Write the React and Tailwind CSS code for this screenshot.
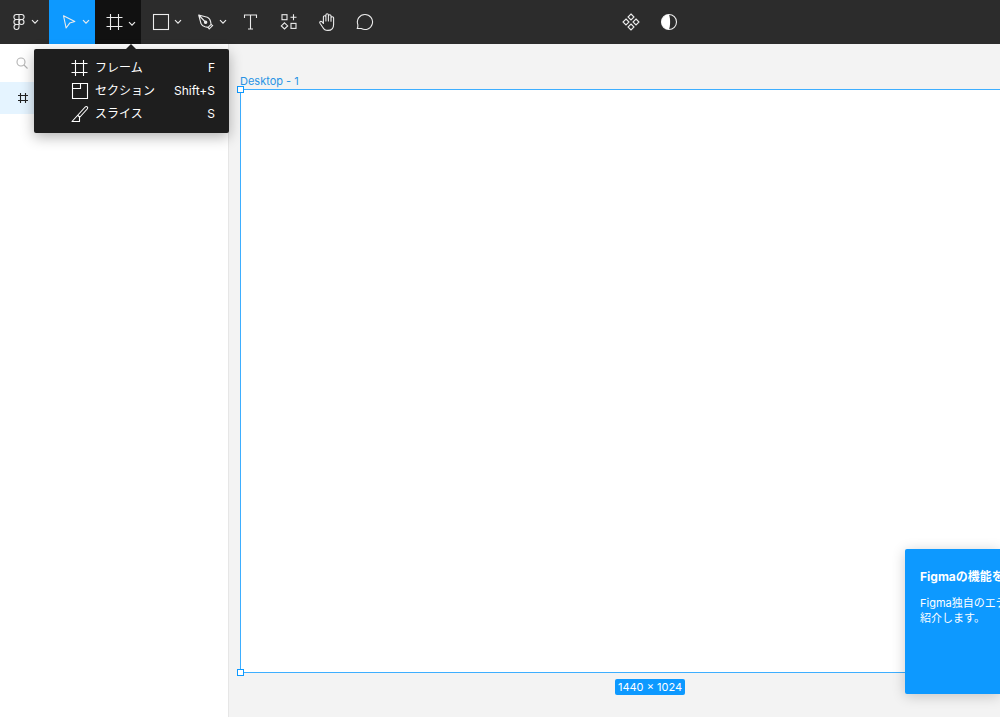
import React from "react";

function Icon({ children, className = "size-[18px]", box = 18 }) {
  return (
    <svg
      viewBox={`0 0 ${box} ${box}`}
      className={`shrink-0 ${className}`}
      fill="none"
      stroke="currentColor"
      strokeWidth="1.1"
      aria-hidden="true"
    >
      {children}
    </svg>
  );
}

const Chevron = ({ className = "" }) => (
  <svg viewBox="0 0 8 6" className={`h-[6px] w-[8px] shrink-0 ${className}`} fill="none" stroke="currentColor" strokeWidth="1.2" aria-hidden="true">
    <path d="M1 1.2 4 4.2 7 1.2" />
  </svg>
);

const FigmaIcon = () => (
  <Icon>
    <path d="M9 1.5H6.4a2.5 2.5 0 0 0 0 5H9zM9 1.5h2.6a2.5 2.5 0 0 1 0 5H9zM9 6.5H6.4a2.5 2.5 0 0 0 0 5H9zM9 11.5H6.4A2.5 2.5 0 1 0 9 14z" />
    <circle cx="11.5" cy="9" r="2.5" />
  </Icon>
);

const MoveIcon = () => (
  <Icon>
    <path d="M3.5 2.7 14.8 8.4 9.7 10.1 6.1 15z" strokeLinejoin="round" />
  </Icon>
);

const FrameIcon = () => (
  <Icon>
    <path d="M4.5 1v16M12.5 1v16M.5 4.5h16M.5 13.5h16" />
  </Icon>
);

const RectIcon = () => (
  <Icon>
    <rect x="1.5" y="1.5" width="15" height="15" />
  </Icon>
);

const PenIcon = () => (
  <Icon>
    <path d="M1.7 2 10.3 4.2c2 .7 2.8 2.1 3.3 4.4l.5 2.8-3 3-3-.6c-2.1-.5-3.4-1.5-4.1-3.3zM1.7 2l6.2 6.5" strokeLinejoin="round" />
    <circle cx="8.6" cy="9.2" r="1.2" fill="currentColor" />
    <path d="m14.1 11.4 1.5 1.2-3.4 3.3-1.1-1.5" />
  </Icon>
);

const TextIcon = () => (
  <Icon>
    <path d="M2.500 5V2h12v3M8.500 2v14M6 16h5" />
  </Icon>
);

const ResourcesIcon = () => (
  <Icon>
    <rect x="2" y="1.7" width="5" height="5" />
    <path d="M13.5 1.2v6M10.5 4.2h6M4.5 9.8l3.2 3.1-3.2 3.1-3.2-3.1z" />
    <rect x="11" y="10.4" width="5" height="5" />
  </Icon>
);

const HandIcon = () => (
  <Icon>
    <path
      d="M5.4 10.5V4a1.25 1.25 0 0 1 2.5 0v4M7.9 8V2a1.25 1.25 0 0 1 2.5 0v6M10.4 3a1.25 1.25 0 0 1 2.6 0v5.2M13 5a1.25 1.25 0 0 1 2.6 0v6.4c0 3.8-2.3 6-5.7 6-2.6 0-4.2-1.2-5.2-3.2L2 10.2C1.1 8.6 3 7.7 4.1 8.9l1.3 1.6"
      strokeLinecap="round"
      strokeLinejoin="round"
    />
  </Icon>
);

const CommentIcon = () => (
  <Icon>
    <path d="M9 1.5a7.5 7.5 0 1 1-3.700 14H1.200c.6-1 .8-2.200.6-4A7.500 7.500 0 0 1 9 1.500z" strokeLinejoin="round" />
  </Icon>
);

const ComponentIcon = () => (
  <Icon>
    <path d="m9 1 3 3-3 3-3-3zM9 11l3 3-3 3-3-3zM4 6l3 3-3 3-3-3zM14 6l3 3-3 3-3-3z" />
  </Icon>
);

const MaskIcon = () => (
  <Icon>
    <circle cx="9" cy="9" r="7.5" />
    <path d="M9 1.500a7.500 7.500 0 0 0 0 15c1.500-4 1.500-11 0-15z" fill="#fff" stroke="none" />
  </Icon>
);

const SectionIcon = () => (
  <Icon>
    <path d="M1.5 1.5h15v15h-15zM1.5 6.5h8v-5" />
  </Icon>
);

const SliceIcon = () => (
  <Icon>
    <path d="M1 16.5 14.2 2c1.600-1.300 3.300.4 2 2L8.5 12.5v4zM7 10.500l1.800 1.800" strokeLinejoin="round" />
  </Icon>
);

const menuItems = [
  { label: "フレーム", keys: "F", icon: FrameIcon },
  { label: "セクション", keys: "Shift+S", icon: SectionIcon },
  { label: "スライス", keys: "S", icon: SliceIcon },
];

function SplitTool({ label, icon: Glyph, className = "w-[46px]", chevron = "" }) {
  return (
    <button type="button" aria-label={label} className={`flex h-full items-center gap-1 pl-[11px] ${className}`}>
      <Glyph />
      <Chevron className={chevron} />
    </button>
  );
}

function Tool({ label, icon: Glyph }) {
  return (
    <button type="button" aria-label={label} className="flex h-full w-[38px] items-center justify-center">
      <Glyph />
    </button>
  );
}

function FrameMenu() {
  return (
    <div className="absolute top-[49px] -left-[61px] z-20 w-[195px] rounded-[2px] bg-[#1e1e1e] pt-[7px] pb-[8px] text-white shadow-[0_4px_14px_rgba(0,0,0,0.3)]">
      <svg viewBox="0 0 10 5" className="absolute -top-[5px] left-[92px] h-[5px] w-[10px]" fill="#1e1e1e" aria-hidden="true">
        <path d="M0 5 5 0l5 5z" />
      </svg>
      <ul role="menu">
        {menuItems.map(({ label, keys, icon: Glyph }) => (
          <li key={label} role="none">
            <button type="button" role="menuitem" className="flex h-[23px] w-full items-center gap-[6px] pr-[14px] pl-[37px] text-[12px]">
              <Glyph />
              <span>{label}</span>
              <span className="ml-auto">{keys}</span>
            </button>
          </li>
        ))}
      </ul>
    </div>
  );
}

function Toolbar() {
  return (
    <header className="relative z-10 flex h-[44px] shrink-0 bg-[#2c2c2c] text-[#ececec]">
      <button type="button" aria-label="メインメニュー" className="flex h-full w-[49px] items-center gap-[3px] pl-[10px]">
        <FigmaIcon />
        <Chevron />
      </button>
      <SplitTool label="移動" icon={MoveIcon} className="w-[46px] bg-[#0d99ff]" />
      <div className="relative">
        <SplitTool label="フレーム" icon={FrameIcon} className="w-[46px] bg-[#111111]" chevron="mt-1" />
        <FrameMenu />
      </div>
      <SplitTool label="長方形" icon={RectIcon} className="w-[45px]" />
      <SplitTool label="ペン" icon={PenIcon} className="w-[46px]" />
      <Tool label="テキスト" icon={TextIcon} />
      <Tool label="リソース" icon={ResourcesIcon} />
      <Tool label="手のひら" icon={HandIcon} />
      <Tool label="コメント" icon={CommentIcon} />
      <div className="ml-[228px] flex">
        <Tool label="コンポーネントの作成" icon={ComponentIcon} />
        <Tool label="マスク" icon={MaskIcon} />
      </div>
    </header>
  );
}

function LayersPanel() {
  return (
    <aside className="w-[229px] shrink-0 border-r border-[#e6e6e6] bg-white">
      <button type="button" aria-label="検索" className="flex h-[38px] w-full items-center pl-4 text-[#b3b3b3]">
        <Icon className="size-[12px]" box={12}>
          <circle cx="5" cy="5" r="4" />
          <path d="m8 8 3.5 3.5" />
        </Icon>
      </button>
      <button type="button" aria-label="Desktop - 1" className="flex h-[32px] w-full items-center bg-[#e5f4ff] pl-[17px] text-[#222]">
        <Icon className="size-[12px]" box={12}>
          <path d="M3.5 1v10M8.5 1v10M1 3.5h10M1 8.5h10" />
        </Icon>
      </button>
    </aside>
  );
}

const Handle = ({ className }) => <span className={`absolute size-[7px] border border-[#0d99ff] bg-white ${className}`} />;

function Canvas() {
  return (
    <main className="relative flex min-w-0 flex-1 flex-col overflow-hidden bg-[#f3f3f3] pt-[30px] pl-[11px]">
      <h1 className="text-[11px] leading-[15px] text-[#2a93e4]">Desktop - 1</h1>
      <div className="-mr-[60px] flex flex-1 flex-col pb-[22px]">
        <div className="relative flex-1 border border-[#3daeff] bg-white">
          <Handle className="-top-[4px] -left-[4px]" />
          <Handle className="-bottom-[4px] -left-[4px]" />
        </div>
        <p className="mt-[6px] self-center rounded-[2px] bg-[#0d99ff] px-[3px] text-[11px] leading-[16px] text-white">1440 × 1024</p>
      </div>
      <section className="absolute right-0 bottom-[23px] h-[145px] w-[95px] overflow-hidden rounded-l-[2px] bg-[#0d99ff] pt-[19px] pl-[15px] whitespace-nowrap text-white shadow-[0_2px_14px_rgba(0,0,0,0.2)]">
        <h2 className="text-[12px] leading-[18px] font-bold">Figmaの機能を</h2>
        <p className="mt-[10px] text-[11px] leading-[15px]">
          Figma独自のエデ
          <br />
          紹介します。
        </p>
      </section>
    </main>
  );
}

export default function App() {
  return (
    <div className="flex h-screen flex-col overflow-hidden bg-white font-[Inter,'Noto_Sans_CJK_JP',sans-serif]">
      <Toolbar />
      <div className="flex min-h-0 flex-1">
        <LayersPanel />
        <Canvas />
      </div>
    </div>
  );
}
